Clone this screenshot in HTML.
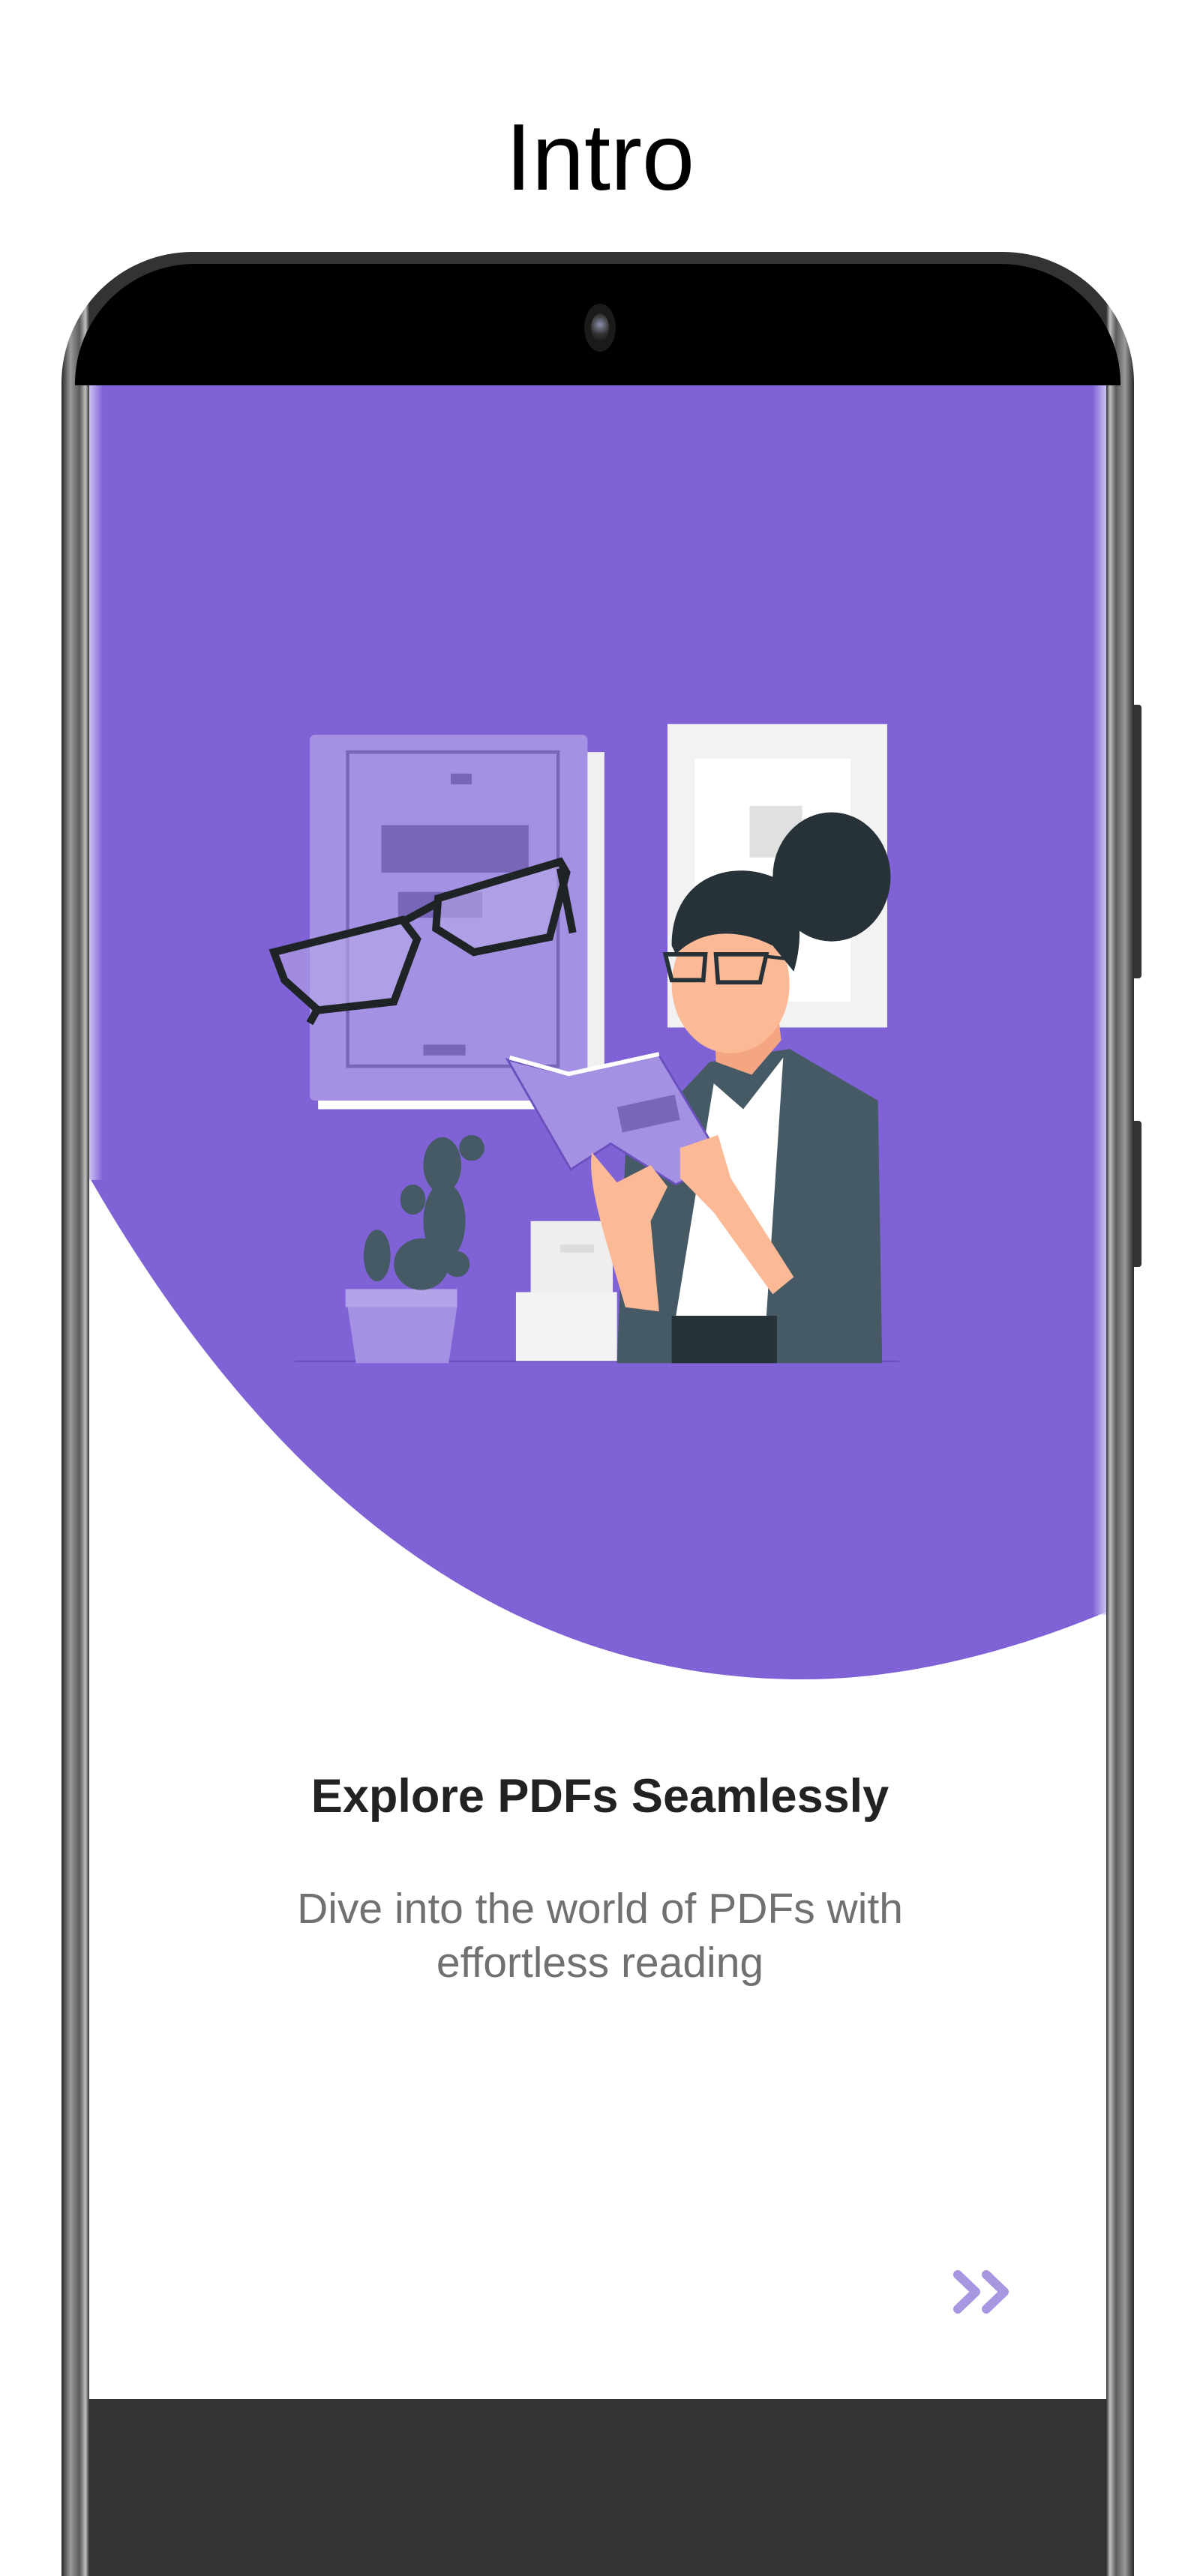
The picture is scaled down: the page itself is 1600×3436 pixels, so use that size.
<!DOCTYPE html>
<html><head><meta charset="utf-8"><style>
html,body{margin:0;padding:0;background:#fff;}
body{width:1600px;height:3200px;position:relative;overflow:hidden;font-family:"Liberation Sans",sans-serif;}
.intro{position:absolute;top:140px;left:0;width:1600px;text-align:center;font-size:126px;color:#000;line-height:140px;}
.frame{position:absolute;left:82px;top:336px;width:1430px;height:3100px;border-radius:175px 175px 0 0;background:linear-gradient(90deg,#2a2a2a 0,#9a9a9a 12px,#5a5a5a 24px,#c0c0c0 32px,#333 37px,#333 1393px,#c0c0c0 1398px,#5a5a5a 1406px,#9a9a9a 1418px,#2a2a2a 1430px);}
.topbar{position:absolute;left:100px;top:352px;width:1394px;height:162px;background:#000;border-radius:160px 160px 0 0;}
.btn{position:absolute;left:1510px;width:12px;background:#333;border-radius:0 4px 4px 0;}
h1{position:absolute;left:0;width:1600px;top:2360px;margin:0;text-align:center;font-size:63px;font-weight:bold;color:#222;}
.sub{position:absolute;left:0;width:1600px;top:2510px;text-align:center;font-size:57px;line-height:72px;color:#707070;}
</style></head><body>
<div class="intro">Intro</div>
<div class="btn" style="top:940px;height:365px"></div>
<div class="btn" style="top:1495px;height:195px"></div>
<div class="frame"></div>
<div class="topbar"></div>
<div style="position:absolute;left:779px;top:405px;width:42px;height:64px;border-radius:50%;background:#1a1a1a"></div>
<div style="position:absolute;left:788px;top:418px;width:24px;height:38px;border-radius:50%;background:radial-gradient(circle at 50% 40%,#8890a8 0,#333 50%,#111 100%)"></div>
<svg style="position:absolute;left:0;top:0" width="1600" height="3200">
<rect x="119" y="514" width="1356" height="2700" fill="#fff"/>
<path d="M119 514 H1475 V2150 C1380 2190 1230 2240 1070 2240 C620 2240 320 1920 119 1570 Z" fill="#7f63d6"/>
<defs><linearGradient id="el" x1="0" x2="1"><stop offset="0" stop-color="#d6ccf5" stop-opacity=".9"/><stop offset="1" stop-color="#d6ccf5" stop-opacity="0"/></linearGradient>
<linearGradient id="er" x1="1" x2="0"><stop offset="0" stop-color="#d6ccf5" stop-opacity=".9"/><stop offset="1" stop-color="#d6ccf5" stop-opacity="0"/></linearGradient></defs>
<rect x="119" y="514" width="18" height="1060" fill="url(#el)"/>
<rect x="1457" y="514" width="18" height="1640" fill="url(#er)"/>
<svg x="340" y="940" width="880" height="900" viewBox="0 0 1568 1568" preserveAspectRatio="none">
<line x1="95" y1="1526" x2="1530" y2="1526" stroke="#6a50bc" stroke-width="4"/>
<rect x="980" y="45" width="522" height="705" fill="#f2f2f2"/>
<rect x="1045" y="125" width="370" height="565" fill="#fff"/>
<rect x="1175" y="235" width="125" height="120" fill="#e0e0e0"/>
<rect x="150" y="860" width="520" height="80" fill="#fff"/>
<rect x="740" y="110" width="90" height="790" fill="#f0f0f0"/>
<rect x="130" y="70" width="660" height="850" rx="12" fill="#a491e3"/>
<rect x="220" y="110" width="500" height="730" fill="none" stroke="#7a66b8" stroke-width="8"/>
<rect x="465" y="160" width="50" height="25" fill="#7a66b8"/>
<rect x="300" y="280" width="350" height="110" fill="#7a66b8"/>
<rect x="340" y="435" width="200" height="60" fill="#7a66b8"/>
<rect x="400" y="790" width="100" height="25" fill="#7a66b8"/>
<path d="M45 575 L350 500 L385 545 L330 690 L150 710 L70 640 Z M435 450 L725 365 L740 390 L700 540 L520 575 L430 520 Z" fill="#b7a9ea" fill-opacity=".6" stroke="#1e2326" stroke-width="18"/>
<path d="M350 505 L435 460 M725 380 L755 530 M130 740 L150 705" stroke="#1e2326" stroke-width="18"/>
<path d="M260 1360 L480 1360 L480 1400 L460 1530 L240 1530 L220 1400 Z" fill="#a491e3"/>
<rect x="215" y="1358" width="265" height="42" fill="#b3a4ea"/>
<g fill="#455a64"><ellipse cx="445" cy="1070" rx="45" ry="65"/><ellipse cx="515" cy="1030" rx="30" ry="30"/><ellipse cx="450" cy="1200" rx="50" ry="90"/><ellipse cx="375" cy="1150" rx="30" ry="35"/><ellipse cx="395" cy="1300" rx="65" ry="60"/><ellipse cx="290" cy="1280" rx="32" ry="60"/><ellipse cx="480" cy="1300" rx="30" ry="30"/></g>
<rect x="655" y="1200" width="195" height="170" fill="#eeeeee"/>
<rect x="620" y="1365" width="240" height="160" fill="#f3f3f3"/>
<rect x="725" y="1255" width="80" height="18" fill="#dcdcdc"/>
<path d="M860 1530 L880 1040 L1080 830 L1270 800 L1480 920 L1490 1530 Z" fill="#455a64"/>
<path d="M1090 880 L1160 940 L1255 820 L1215 1420 L1000 1420 Z" fill="#fff"/>
<rect x="990" y="1420" width="250" height="110" fill="#263238"/>
<path d="M1090 700 L1095 830 L1180 860 L1250 780 L1240 690 Z" fill="#f4a582"/>
<ellipse cx="1370" cy="400" rx="140" ry="150" fill="#263238"/>
<ellipse cx="1130" cy="650" rx="140" ry="160" fill="#fbb995"/>
<path d="M990 560 C990 400 1130 360 1230 400 C1290 430 1310 520 1280 620 L1230 560 C1150 520 1060 520 1000 580 Z" fill="#263238"/>
<path d="M975 580 H1070 L1065 640 H990 Z M1095 580 H1215 L1200 645 H1100 Z" fill="none" stroke="#263238" stroke-width="10"/>
<path d="M1215 585 L1260 590" stroke="#263238" stroke-width="8"/>
<path d="M600 825 L745 860 L960 815 L1110 1060 L1000 1115 L845 1020 L750 1080 Z" fill="#a491e3" stroke="#6a50bc" stroke-width="5"/>
<path d="M605 820 L745 858 L960 812" stroke="#fff" stroke-width="10" fill="none"/>
<rect x="865" y="920" width="140" height="60" fill="#7a66b8" transform="rotate(-12 935 950)"/>
<path d="M800 1040 C790 1120 830 1230 880 1400 L960 1410 L940 1200 L980 1120 L940 1070 L860 1110 Z" fill="#fbb995"/>
<path d="M1010 1030 L1100 1000 L1130 1100 L1280 1330 L1230 1370 L1090 1180 L1010 1100 Z" fill="#fbb995"/>
</svg>
</svg>
<h1>Explore PDFs Seamlessly</h1>
<div class="sub">Dive into the world of PDFs with<br>effortless reading</div>
<svg style="position:absolute;left:1265px;top:3025px" width="90" height="70" viewBox="0 0 90 70">
<path d="M12 9 L36 32 L12 55 M50 9 L74 32 L50 55" fill="none" stroke="#a896e0" stroke-width="12" stroke-linecap="round" stroke-linejoin="round"/>
</svg>
</body></html>
